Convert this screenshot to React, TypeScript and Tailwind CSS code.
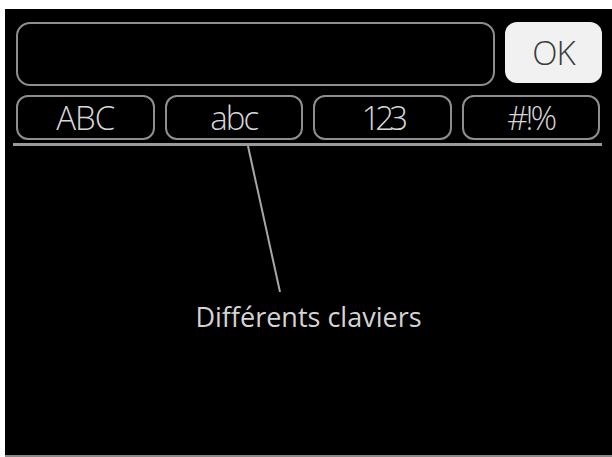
const tabs = [
  { label: "ABC", track: "tracking-[-1px]" },
  { label: "abc", track: "tracking-[-2px]" },
  { label: "123", track: "tracking-[-5px]" },
  { label: "#!%", track: "tracking-[-3px]" },
];

export default function App() {
  return (
    <div
      className="w-[612px] h-[457px] bg-white pt-[9px] pl-[5px] flex flex-col"
      style={{ fontFamily: '"Open Sans", "Noto Sans", sans-serif' }}
    >
      <div className="flex-1 bg-black border-b-2 border-[#8a8a8a] flex flex-col">
        {/* input + OK */}
        <div className="flex gap-[10px] mt-[13px] ml-[11px]">
          <div className="w-[479px] h-[64px] rounded-[14px] border-[2.5px] border-[#8e8e8e]" />
          <button className="w-[97px] h-[61px] rounded-[12px] bg-[#f1f1f1] text-[#3c3c3c] text-[33px] font-light leading-none tracking-[-1px] flex items-center justify-center">
            OK
          </button>
        </div>

        {/* keyboard tabs */}
        <div className="grid grid-cols-4 gap-[10px] w-[584px] ml-[11px] mt-[9px]">
          {tabs.map((t) => (
            <div
              key={t.label}
              className={`h-[45px] rounded-[12px] border-[2.5px] border-[#8e8e8e] text-[#d6d6d6] text-[33px] font-light leading-none flex items-center justify-center ${t.track}`}
            >
              {t.label}
            </div>
          ))}
        </div>

        <div className="h-[3px] w-[589px] ml-[8px] mt-[3px] bg-[#9a9a9a]" />

        {/* callout line */}
        <svg width="40" height="146" className="ml-[240px] block">
          <line x1="3" y1="0" x2="35" y2="146" stroke="#a8a8a8" strokeWidth="2" />
        </svg>

        <div className="mt-[6px] text-center text-[27px] leading-[37px] text-[#d4d4d4]">
          Différents claviers
        </div>
      </div>
    </div>
  );
}
